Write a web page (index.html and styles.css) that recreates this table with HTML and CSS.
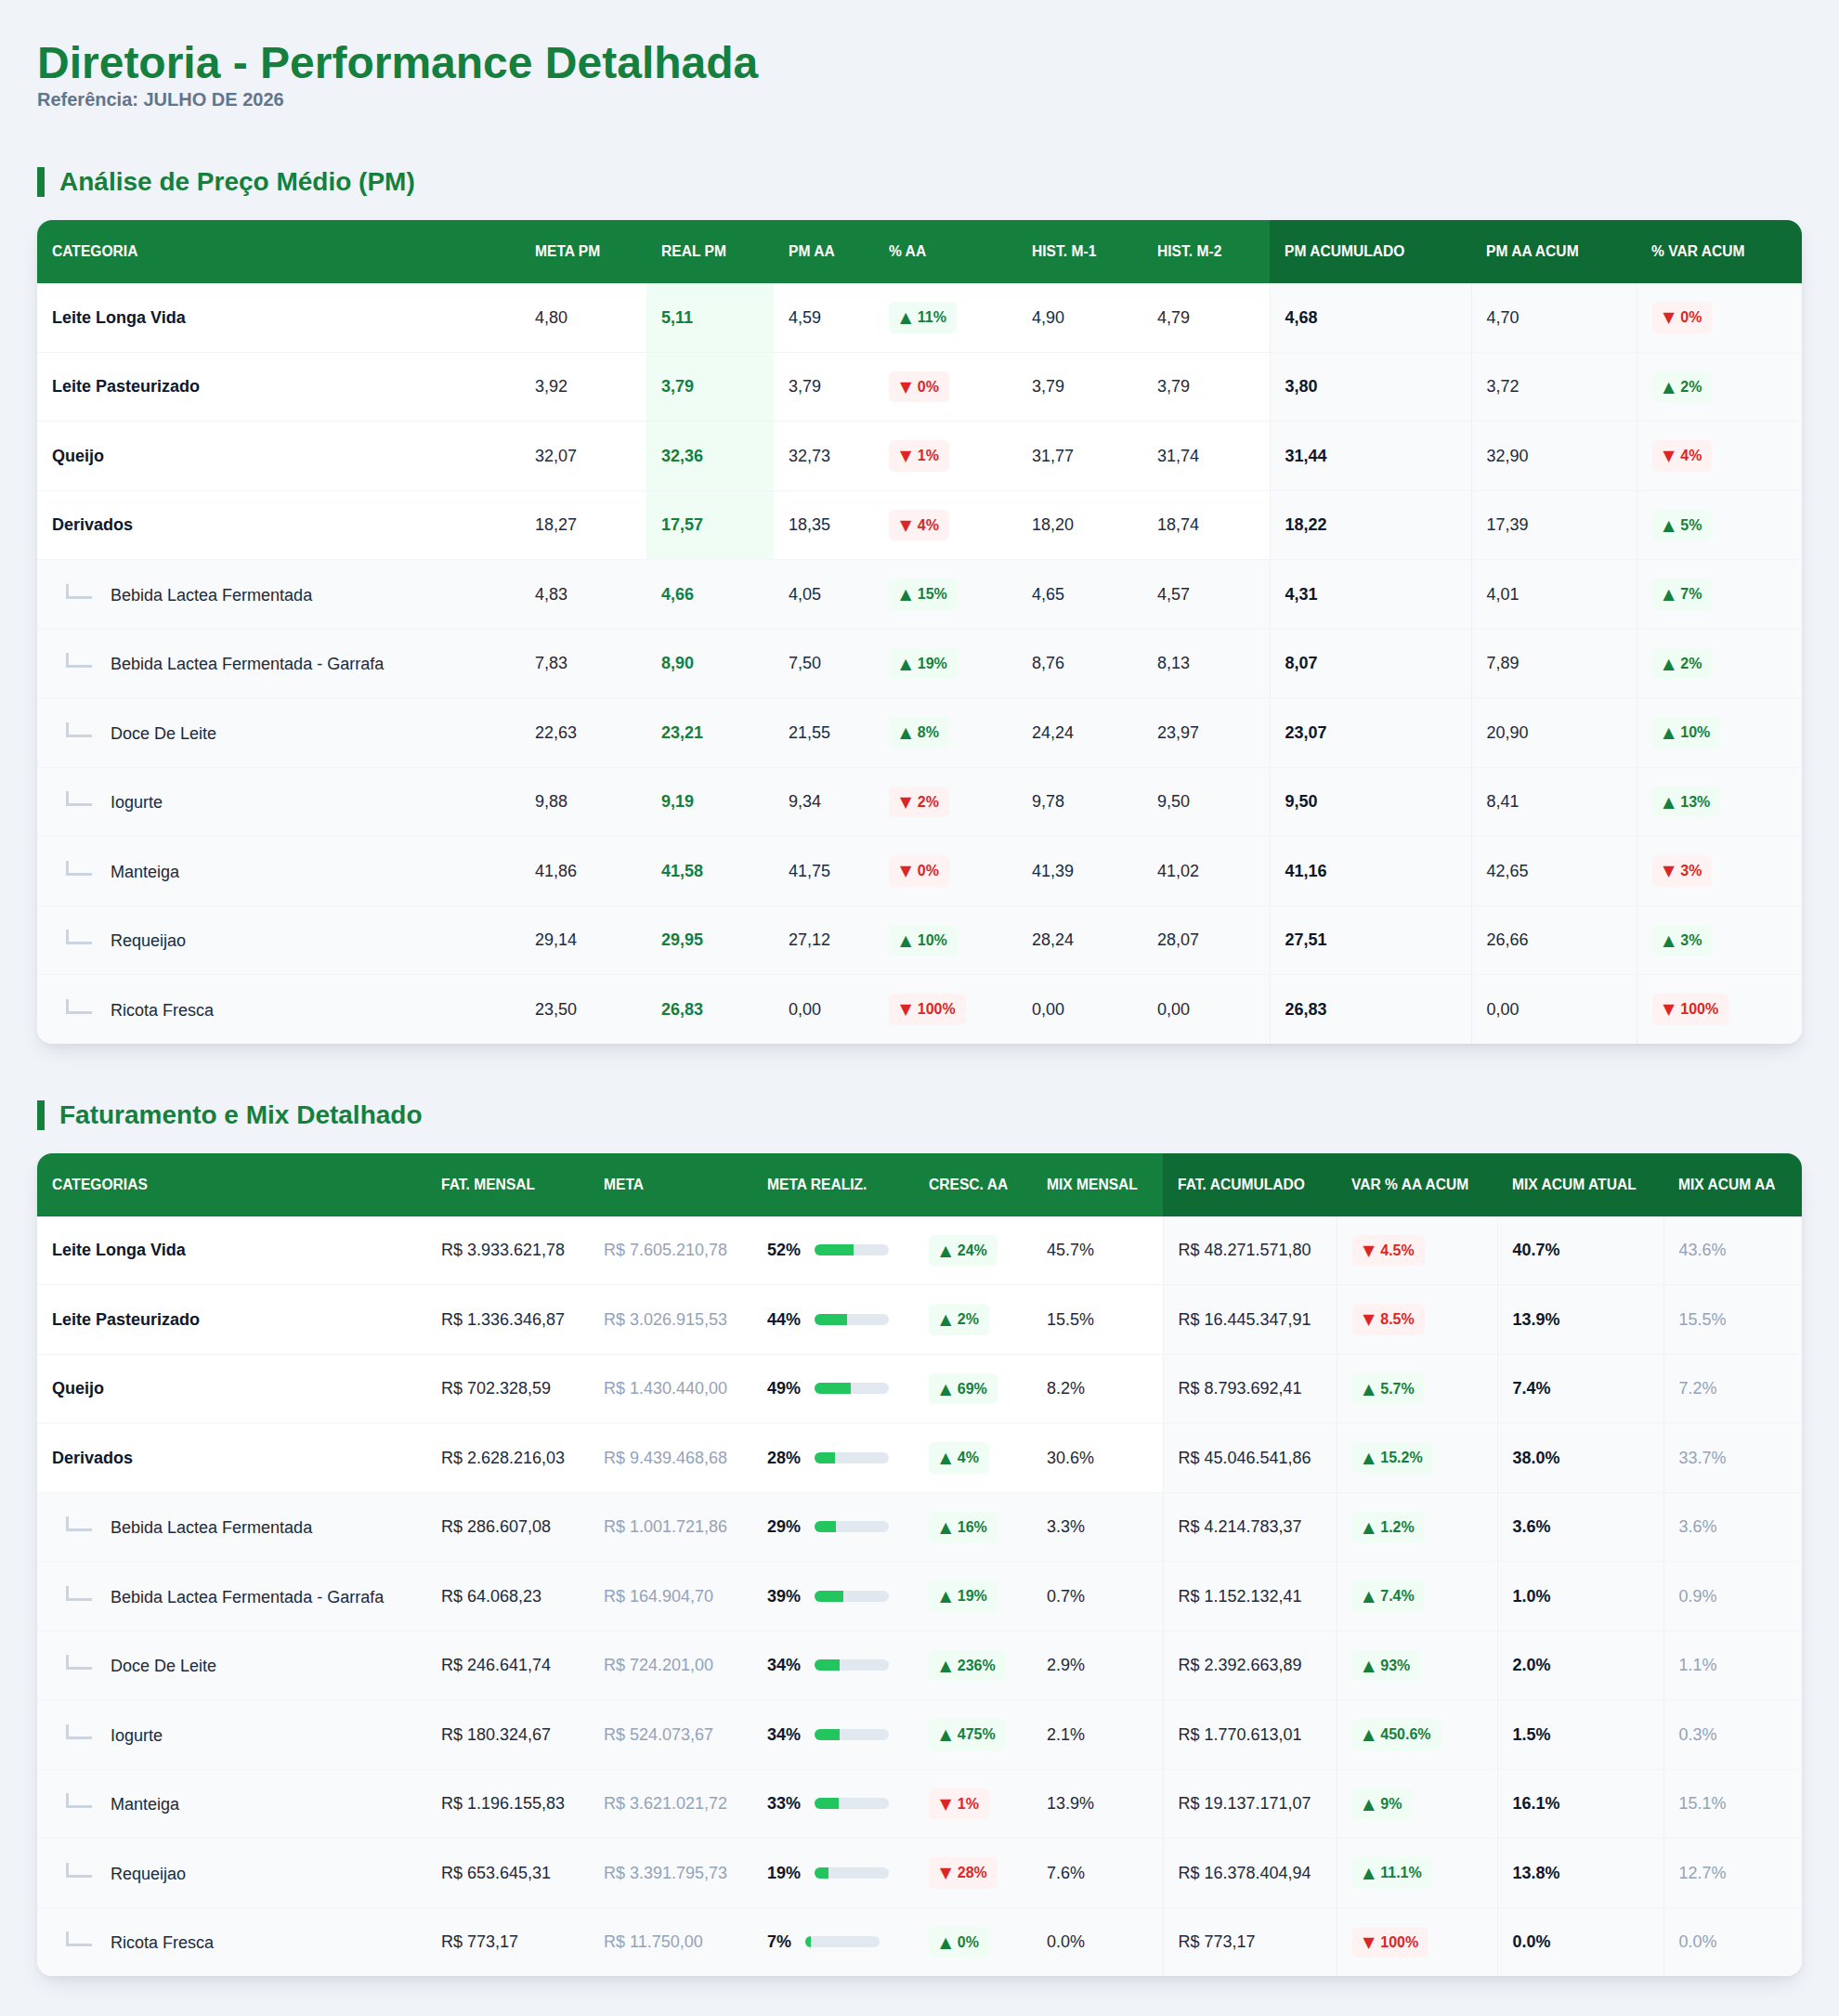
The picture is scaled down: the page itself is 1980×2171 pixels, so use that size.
FILE: index.html
```html
<!DOCTYPE html>
<html lang="pt-BR">
<head>
<meta charset="utf-8">
<title>Diretoria - Performance Detalhada</title>
<link rel="stylesheet" href="styles.css">
</head>
<body>
<header class="page-header">
  <h1 class="title">Diretoria - Performance Detalhada</h1>
  <p class="subtitle">Referência: JULHO DE 2026</p>
</header>

<section class="section">
  <h2 class="section-title">Análise de Preço Médio (PM)</h2>
  <div class="card">
    <table class="pm">
      <thead>
        <tr>
          <th class="c-cat">Categoria</th>
          <th class="c-meta">Meta PM</th>
          <th class="c-real">Real PM</th>
          <th class="c-pmaa">PM AA</th>
          <th class="c-paa">% AA</th>
          <th class="c-m1">Hist. M-1</th>
          <th class="c-m2">Hist. M-2</th>
          <th class="c-acum acc">PM Acumulado</th>
          <th class="c-aaacum acc">PM AA Acum</th>
          <th class="c-var acc">% Var Acum</th>
        </tr>
      </thead>
      <tbody>
        <tr class="main">
          <td class="name">Leite Longa Vida</td><td>4,80</td><td class="real">5,11</td><td>4,59</td>
          <td><span class="badge up"><span class="arrow">▲</span> 11%</span></td><td>4,90</td><td>4,79</td>
          <td class="acc strong">4,68</td><td class="acc">4,70</td><td class="acc"><span class="badge down"><span class="arrow">▼</span> 0%</span></td>
        </tr>
        <tr class="main">
          <td class="name">Leite Pasteurizado</td><td>3,92</td><td class="real">3,79</td><td>3,79</td>
          <td><span class="badge down"><span class="arrow">▼</span> 0%</span></td><td>3,79</td><td>3,79</td>
          <td class="acc strong">3,80</td><td class="acc">3,72</td><td class="acc"><span class="badge up"><span class="arrow">▲</span> 2%</span></td>
        </tr>
        <tr class="main">
          <td class="name">Queijo</td><td>32,07</td><td class="real">32,36</td><td>32,73</td>
          <td><span class="badge down"><span class="arrow">▼</span> 1%</span></td><td>31,77</td><td>31,74</td>
          <td class="acc strong">31,44</td><td class="acc">32,90</td><td class="acc"><span class="badge down"><span class="arrow">▼</span> 4%</span></td>
        </tr>
        <tr class="main">
          <td class="name">Derivados</td><td>18,27</td><td class="real">17,57</td><td>18,35</td>
          <td><span class="badge down"><span class="arrow">▼</span> 4%</span></td><td>18,20</td><td>18,74</td>
          <td class="acc strong">18,22</td><td class="acc">17,39</td><td class="acc"><span class="badge up"><span class="arrow">▲</span> 5%</span></td>
        </tr>
        <tr class="sub">
          <td><span class="tree"></span>Bebida Lactea Fermentada</td><td>4,83</td><td class="real">4,66</td><td>4,05</td>
          <td><span class="badge up"><span class="arrow">▲</span> 15%</span></td><td>4,65</td><td>4,57</td>
          <td class="acc strong">4,31</td><td class="acc">4,01</td><td class="acc"><span class="badge up"><span class="arrow">▲</span> 7%</span></td>
        </tr>
        <tr class="sub">
          <td><span class="tree"></span>Bebida Lactea Fermentada - Garrafa</td><td>7,83</td><td class="real">8,90</td><td>7,50</td>
          <td><span class="badge up"><span class="arrow">▲</span> 19%</span></td><td>8,76</td><td>8,13</td>
          <td class="acc strong">8,07</td><td class="acc">7,89</td><td class="acc"><span class="badge up"><span class="arrow">▲</span> 2%</span></td>
        </tr>
        <tr class="sub">
          <td><span class="tree"></span>Doce De Leite</td><td>22,63</td><td class="real">23,21</td><td>21,55</td>
          <td><span class="badge up"><span class="arrow">▲</span> 8%</span></td><td>24,24</td><td>23,97</td>
          <td class="acc strong">23,07</td><td class="acc">20,90</td><td class="acc"><span class="badge up"><span class="arrow">▲</span> 10%</span></td>
        </tr>
        <tr class="sub">
          <td><span class="tree"></span>Iogurte</td><td>9,88</td><td class="real">9,19</td><td>9,34</td>
          <td><span class="badge down"><span class="arrow">▼</span> 2%</span></td><td>9,78</td><td>9,50</td>
          <td class="acc strong">9,50</td><td class="acc">8,41</td><td class="acc"><span class="badge up"><span class="arrow">▲</span> 13%</span></td>
        </tr>
        <tr class="sub">
          <td><span class="tree"></span>Manteiga</td><td>41,86</td><td class="real">41,58</td><td>41,75</td>
          <td><span class="badge down"><span class="arrow">▼</span> 0%</span></td><td>41,39</td><td>41,02</td>
          <td class="acc strong">41,16</td><td class="acc">42,65</td><td class="acc"><span class="badge down"><span class="arrow">▼</span> 3%</span></td>
        </tr>
        <tr class="sub">
          <td><span class="tree"></span>Requeijao</td><td>29,14</td><td class="real">29,95</td><td>27,12</td>
          <td><span class="badge up"><span class="arrow">▲</span> 10%</span></td><td>28,24</td><td>28,07</td>
          <td class="acc strong">27,51</td><td class="acc">26,66</td><td class="acc"><span class="badge up"><span class="arrow">▲</span> 3%</span></td>
        </tr>
        <tr class="sub">
          <td><span class="tree"></span>Ricota Fresca</td><td>23,50</td><td class="real">26,83</td><td>0,00</td>
          <td><span class="badge down"><span class="arrow">▼</span> 100%</span></td><td>0,00</td><td>0,00</td>
          <td class="acc strong">26,83</td><td class="acc">0,00</td><td class="acc"><span class="badge down"><span class="arrow">▼</span> 100%</span></td>
        </tr>
      </tbody>
    </table>
  </div>
</section>

<section class="section">
  <h2 class="section-title">Faturamento e Mix Detalhado</h2>
  <div class="card">
    <table class="fat">
      <thead>
        <tr>
          <th class="f-cat">Categorias</th>
          <th class="f-mensal">Fat. Mensal</th>
          <th class="f-meta">Meta</th>
          <th class="f-realiz">Meta Realiz.</th>
          <th class="f-cresc">Cresc. AA</th>
          <th class="f-mix">Mix Mensal</th>
          <th class="f-acum acc">Fat. Acumulado</th>
          <th class="f-var acc">Var % AA Acum</th>
          <th class="f-mixat acc">Mix Acum Atual</th>
          <th class="f-mixaa acc">Mix Acum AA</th>
        </tr>
      </thead>
      <tbody>
        <tr class="main">
          <td class="name">Leite Longa Vida</td><td>R$ 3.933.621,78</td><td class="muted">R$ 7.605.210,78</td>
          <td><div class="progress"><span class="pct">52%</span><span class="bar"><span class="fill" style="width:52%"></span></span></div></td>
          <td><span class="badge up"><span class="arrow">▲</span> 24%</span></td><td>45.7%</td>
          <td class="acc">R$ 48.271.571,80</td><td class="acc"><span class="badge down"><span class="arrow">▼</span> 4.5%</span></td><td class="acc strong">40.7%</td><td class="acc muted">43.6%</td>
        </tr>
        <tr class="main">
          <td class="name">Leite Pasteurizado</td><td>R$ 1.336.346,87</td><td class="muted">R$ 3.026.915,53</td>
          <td><div class="progress"><span class="pct">44%</span><span class="bar"><span class="fill" style="width:44%"></span></span></div></td>
          <td><span class="badge up"><span class="arrow">▲</span> 2%</span></td><td>15.5%</td>
          <td class="acc">R$ 16.445.347,91</td><td class="acc"><span class="badge down"><span class="arrow">▼</span> 8.5%</span></td><td class="acc strong">13.9%</td><td class="acc muted">15.5%</td>
        </tr>
        <tr class="main">
          <td class="name">Queijo</td><td>R$ 702.328,59</td><td class="muted">R$ 1.430.440,00</td>
          <td><div class="progress"><span class="pct">49%</span><span class="bar"><span class="fill" style="width:49%"></span></span></div></td>
          <td><span class="badge up"><span class="arrow">▲</span> 69%</span></td><td>8.2%</td>
          <td class="acc">R$ 8.793.692,41</td><td class="acc"><span class="badge up"><span class="arrow">▲</span> 5.7%</span></td><td class="acc strong">7.4%</td><td class="acc muted">7.2%</td>
        </tr>
        <tr class="main">
          <td class="name">Derivados</td><td>R$ 2.628.216,03</td><td class="muted">R$ 9.439.468,68</td>
          <td><div class="progress"><span class="pct">28%</span><span class="bar"><span class="fill" style="width:28%"></span></span></div></td>
          <td><span class="badge up"><span class="arrow">▲</span> 4%</span></td><td>30.6%</td>
          <td class="acc">R$ 45.046.541,86</td><td class="acc"><span class="badge up"><span class="arrow">▲</span> 15.2%</span></td><td class="acc strong">38.0%</td><td class="acc muted">33.7%</td>
        </tr>
        <tr class="sub">
          <td><span class="tree"></span>Bebida Lactea Fermentada</td><td>R$ 286.607,08</td><td class="muted">R$ 1.001.721,86</td>
          <td><div class="progress"><span class="pct">29%</span><span class="bar"><span class="fill" style="width:29%"></span></span></div></td>
          <td><span class="badge up"><span class="arrow">▲</span> 16%</span></td><td>3.3%</td>
          <td class="acc">R$ 4.214.783,37</td><td class="acc"><span class="badge up"><span class="arrow">▲</span> 1.2%</span></td><td class="acc strong">3.6%</td><td class="acc muted">3.6%</td>
        </tr>
        <tr class="sub">
          <td><span class="tree"></span>Bebida Lactea Fermentada - Garrafa</td><td>R$ 64.068,23</td><td class="muted">R$ 164.904,70</td>
          <td><div class="progress"><span class="pct">39%</span><span class="bar"><span class="fill" style="width:39%"></span></span></div></td>
          <td><span class="badge up"><span class="arrow">▲</span> 19%</span></td><td>0.7%</td>
          <td class="acc">R$ 1.152.132,41</td><td class="acc"><span class="badge up"><span class="arrow">▲</span> 7.4%</span></td><td class="acc strong">1.0%</td><td class="acc muted">0.9%</td>
        </tr>
        <tr class="sub">
          <td><span class="tree"></span>Doce De Leite</td><td>R$ 246.641,74</td><td class="muted">R$ 724.201,00</td>
          <td><div class="progress"><span class="pct">34%</span><span class="bar"><span class="fill" style="width:34%"></span></span></div></td>
          <td><span class="badge up"><span class="arrow">▲</span> 236%</span></td><td>2.9%</td>
          <td class="acc">R$ 2.392.663,89</td><td class="acc"><span class="badge up"><span class="arrow">▲</span> 93%</span></td><td class="acc strong">2.0%</td><td class="acc muted">1.1%</td>
        </tr>
        <tr class="sub">
          <td><span class="tree"></span>Iogurte</td><td>R$ 180.324,67</td><td class="muted">R$ 524.073,67</td>
          <td><div class="progress"><span class="pct">34%</span><span class="bar"><span class="fill" style="width:34%"></span></span></div></td>
          <td><span class="badge up"><span class="arrow">▲</span> 475%</span></td><td>2.1%</td>
          <td class="acc">R$ 1.770.613,01</td><td class="acc"><span class="badge up"><span class="arrow">▲</span> 450.6%</span></td><td class="acc strong">1.5%</td><td class="acc muted">0.3%</td>
        </tr>
        <tr class="sub">
          <td><span class="tree"></span>Manteiga</td><td>R$ 1.196.155,83</td><td class="muted">R$ 3.621.021,72</td>
          <td><div class="progress"><span class="pct">33%</span><span class="bar"><span class="fill" style="width:33%"></span></span></div></td>
          <td><span class="badge down"><span class="arrow">▼</span> 1%</span></td><td>13.9%</td>
          <td class="acc">R$ 19.137.171,07</td><td class="acc"><span class="badge up"><span class="arrow">▲</span> 9%</span></td><td class="acc strong">16.1%</td><td class="acc muted">15.1%</td>
        </tr>
        <tr class="sub">
          <td><span class="tree"></span>Requeijao</td><td>R$ 653.645,31</td><td class="muted">R$ 3.391.795,73</td>
          <td><div class="progress"><span class="pct">19%</span><span class="bar"><span class="fill" style="width:19%"></span></span></div></td>
          <td><span class="badge down"><span class="arrow">▼</span> 28%</span></td><td>7.6%</td>
          <td class="acc">R$ 16.378.404,94</td><td class="acc"><span class="badge up"><span class="arrow">▲</span> 11.1%</span></td><td class="acc strong">13.8%</td><td class="acc muted">12.7%</td>
        </tr>
        <tr class="sub">
          <td><span class="tree"></span>Ricota Fresca</td><td>R$ 773,17</td><td class="muted">R$ 11.750,00</td>
          <td><div class="progress"><span class="pct">7%</span><span class="bar"><span class="fill" style="width:7%"></span></span></div></td>
          <td><span class="badge up"><span class="arrow">▲</span> 0%</span></td><td>0.0%</td>
          <td class="acc">R$ 773,17</td><td class="acc"><span class="badge down"><span class="arrow">▼</span> 100%</span></td><td class="acc strong">0.0%</td><td class="acc muted">0.0%</td>
        </tr>
      </tbody>
    </table>
  </div>
</section>
</body>
</html>
```

FILE: styles.css
```css
* { box-sizing: content-box; }

body {
  margin: 0;
  padding: 40px;
  background: #f0f3f8;
  font-family: "Liberation Sans", Arial, Helvetica, sans-serif;
  color: #1e293b;
}

.page-header {
  margin-bottom: 61px;
}

.title {
  margin: 0;
  font-size: 48px;
  line-height: 56px;
  font-weight: 700;
  color: #15803d;
}

.subtitle {
  margin: 0;
  font-size: 20px;
  line-height: 23px;
  font-weight: 700;
  color: #64748b;
}

.section {
  margin-bottom: 61px;
}

.section:last-child {
  margin-bottom: 0;
}

.section-title {
  margin: 0 0 25px;
  font-size: 28px;
  line-height: 32px;
  font-weight: 700;
  color: #15803d;
  border-left: 8px solid #15803d;
  padding-left: 16px;
}

.card {
  background: #ffffff;
  border-radius: 16px;
  overflow: hidden;
  box-shadow: 0 10px 24px -6px rgba(15, 23, 42, 0.12), 0 3px 8px -2px rgba(15, 23, 42, 0.05);
}

table {
  width: 100%;
  border-collapse: collapse;
  table-layout: fixed;
}

th {
  background: #15803d;
  color: #ffffff;
  text-align: left;
  font-size: 15.6px;
  line-height: 18px;
  font-weight: 700;
  text-transform: uppercase;
  padding: 25px 16px;
  white-space: nowrap;
}

th.acc {
  background: #0e6b33;
}

td {
  padding: 20px 16px;
  font-size: 18px;
  line-height: 20px;
  border-bottom: 1px solid #f1f5f9;
  vertical-align: middle;
  white-space: nowrap;
  color: #1e293b;
}

tbody tr:last-child td {
  border-bottom: none;
}

td.name {
  font-weight: 700;
  color: #0f172a;
}

tr.sub td {
  background: #f8fafc;
}

td.acc {
  background: #f8fafc;
  border-left: 1px solid #eef2f7;
}

td.strong {
  font-weight: 700;
  color: #0f172a;
}

td.real {
  font-weight: 700;
  color: #15803d;
}

tr.main td.real {
  background: #f0fdf4;
}

td.muted {
  color: #94a3b8;
}

/* column widths: table 1 */
.c-meta { width: 104px; }
.c-real { width: 105px; }
.c-pmaa { width: 76px; }
.c-paa { width: 122px; }
.c-m1 { width: 103px; }
.c-m2 { width: 105px; }
.c-acum { width: 185px; }
.c-aaacum { width: 146px; }
.c-var { width: 146px; }

/* column widths: table 2 */
.f-mensal { width: 143px; }
.f-meta { width: 144px; }
.f-realiz { width: 142px; }
.f-cresc { width: 95px; }
.f-mix { width: 109px; }
.f-acum { width: 155px; }
.f-var { width: 141px; }
.f-mixat { width: 147px; }
.f-mixaa { width: 117px; }

.tree {
  display: inline-block;
  width: 25px;
  height: 13px;
  border-left: 3px solid #cbd5e1;
  border-bottom: 3px solid #cbd5e1;
  margin: 0 20px 2px 15px;
}

.badge {
  display: inline-block;
  vertical-align: middle;
  padding: 8px 11px 8px 12px;
  border-radius: 6px;
  font-size: 16px;
  line-height: 17.5px;
  font-weight: 700;
}

.arrow {
  font-family: "DejaVu Sans", sans-serif;
  font-weight: 400;
  margin-right: 2px;
}

.badge.up {
  background: #f0fdf4;
  color: #15803d;
}

.badge.down {
  background: #fef2f2;
  color: #dc2626;
}

.progress {
  display: flex;
  align-items: center;
  gap: 15px;
}

.pct {
  font-weight: 700;
  color: #0f172a;
}

.bar {
  display: block;
  width: 80px;
  height: 12px;
  background: #e2e8f0;
  border-radius: 6px;
  overflow: hidden;
}

.fill {
  display: block;
  height: 100%;
  background: #22c55e;
}
```
